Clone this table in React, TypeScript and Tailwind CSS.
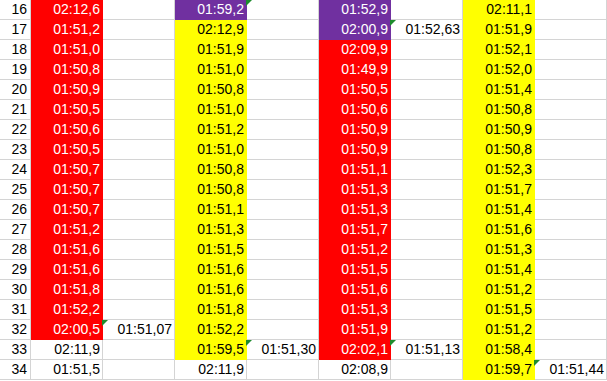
import React from "react";

// r = rojo, y = amarillo, p = morado; t = triángulo verde de error
type Cell = { v?: string; c?: "r" | "y" | "p"; t?: boolean };

const rows: { n: number; cells: Cell[] }[] = [
  { n: 16, cells: [{ v: "02:12,6", c: "r" }, {}, { v: "01:59,2", c: "p" }, { t: true }, { v: "01:52,9", c: "p" }, {}, { v: "02:11,1", c: "y" }, {}] },
  { n: 17, cells: [{ v: "01:51,2", c: "r" }, {}, { v: "02:12,9", c: "y" }, {}, { v: "02:00,9", c: "p" }, { v: "01:52,63", t: true }, { v: "01:51,9", c: "y" }, {}] },
  { n: 18, cells: [{ v: "01:51,0", c: "r" }, {}, { v: "01:51,9", c: "y" }, {}, { v: "02:09,9", c: "r" }, {}, { v: "01:52,1", c: "y" }, {}] },
  { n: 19, cells: [{ v: "01:50,8", c: "r" }, {}, { v: "01:51,0", c: "y" }, {}, { v: "01:49,9", c: "r" }, {}, { v: "01:52,0", c: "y" }, {}] },
  { n: 20, cells: [{ v: "01:50,9", c: "r" }, {}, { v: "01:50,8", c: "y" }, {}, { v: "01:50,5", c: "r" }, {}, { v: "01:51,4", c: "y" }, {}] },
  { n: 21, cells: [{ v: "01:50,5", c: "r" }, {}, { v: "01:51,0", c: "y" }, {}, { v: "01:50,6", c: "r" }, {}, { v: "01:50,8", c: "y" }, {}] },
  { n: 22, cells: [{ v: "01:50,6", c: "r" }, {}, { v: "01:51,2", c: "y" }, {}, { v: "01:50,9", c: "r" }, {}, { v: "01:50,9", c: "y" }, {}] },
  { n: 23, cells: [{ v: "01:50,5", c: "r" }, {}, { v: "01:51,0", c: "y" }, {}, { v: "01:50,9", c: "r" }, {}, { v: "01:50,8", c: "y" }, {}] },
  { n: 24, cells: [{ v: "01:50,7", c: "r" }, {}, { v: "01:50,8", c: "y" }, {}, { v: "01:51,1", c: "r" }, {}, { v: "01:52,3", c: "y" }, {}] },
  { n: 25, cells: [{ v: "01:50,7", c: "r" }, {}, { v: "01:50,8", c: "y" }, {}, { v: "01:51,3", c: "r" }, {}, { v: "01:51,7", c: "y" }, {}] },
  { n: 26, cells: [{ v: "01:50,7", c: "r" }, {}, { v: "01:51,1", c: "y" }, {}, { v: "01:51,3", c: "r" }, {}, { v: "01:51,4", c: "y" }, {}] },
  { n: 27, cells: [{ v: "01:51,2", c: "r" }, {}, { v: "01:51,3", c: "y" }, {}, { v: "01:51,7", c: "r" }, {}, { v: "01:51,6", c: "y" }, {}] },
  { n: 28, cells: [{ v: "01:51,6", c: "r" }, {}, { v: "01:51,5", c: "y" }, {}, { v: "01:51,2", c: "r" }, {}, { v: "01:51,3", c: "y" }, {}] },
  { n: 29, cells: [{ v: "01:51,6", c: "r" }, {}, { v: "01:51,6", c: "y" }, {}, { v: "01:51,5", c: "r" }, {}, { v: "01:51,4", c: "y" }, {}] },
  { n: 30, cells: [{ v: "01:51,8", c: "r" }, {}, { v: "01:51,6", c: "y" }, {}, { v: "01:51,6", c: "r" }, {}, { v: "01:51,2", c: "y" }, {}] },
  { n: 31, cells: [{ v: "01:52,2", c: "r" }, {}, { v: "01:51,8", c: "y" }, {}, { v: "01:51,3", c: "r" }, {}, { v: "01:51,5", c: "y" }, {}] },
  { n: 32, cells: [{ v: "02:00,5", c: "r" }, { v: "01:51,07", t: true }, { v: "01:52,2", c: "y" }, {}, { v: "01:51,9", c: "r" }, {}, { v: "01:51,2", c: "y" }, {}] },
  { n: 33, cells: [{ v: "02:11,9" }, {}, { v: "01:59,5", c: "y" }, { v: "01:51,30", t: true }, { v: "02:02,1", c: "r" }, { v: "01:51,13", t: true }, { v: "01:58,4", c: "y" }, {}] },
  { n: 34, cells: [{ v: "01:51,5" }, {}, { v: "02:11,9" }, {}, { v: "02:08,9" }, {}, { v: "01:59,7", c: "y" }, { v: "01:51,44", t: true }] },
];

const fill: Record<string, string> = {
  r: "bg-[#ff0000] border-[#ff0000] text-white",
  y: "bg-[#ffff00] border-[#ffff00] text-black",
  p: "bg-[#7030a0] border-[#7030a0] text-white",
};

export default function App() {
  return (
    <div
      className="w-[607px] h-[381px] overflow-hidden bg-white text-[14px] text-black"
      style={{ fontFamily: '"Liberation Sans", Arial, sans-serif' }}
    >
      <div className="grid grid-cols-[31px_repeat(8,72px)]">
        {rows.map((row) => (
          <React.Fragment key={row.n}>
            <div className="h-[20px] border-r border-b border-[#d4d4d4] flex items-end justify-end pr-[3px] leading-[19px]">
              {row.n}
            </div>
            {row.cells.map((cell, i) => (
              <div
                key={i}
                className={`relative h-[20px] border-r border-b flex items-end justify-end pr-[2px] leading-[19px] ${
                  cell.c ? fill[cell.c] : "border-[#d4d4d4]"
                }`}
              >
                {cell.t && (
                  <span className="absolute top-0 left-[-1px] w-0 h-0 border-t-[6px] border-r-[6px] border-t-[#1e8c2e] border-r-transparent" />
                )}
                {cell.v}
              </div>
            ))}
          </React.Fragment>
        ))}
      </div>
    </div>
  );
}
